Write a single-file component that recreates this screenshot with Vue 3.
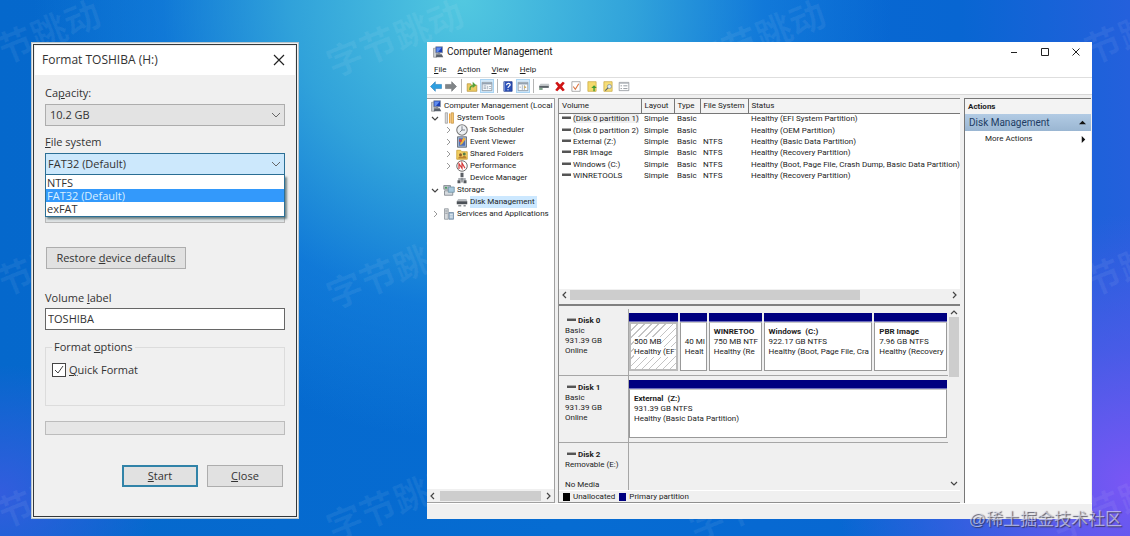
<script setup>
import { ref } from 'vue'

const capacity = ref('10.2 GB')
const fileSystem = ref('FAT32 (Default)')
const fileSystems = ['NTFS', 'FAT32 (Default)', 'exFAT']
const volumeLabel = ref('TOSHIBA')
const quickFormat = ref(true)

const icons = {
  computer: '<path d="M2 3h4v12H2z" fill="#c9cdd2" stroke="#777" stroke-width=".7"/><path d="M5 1h9v8H5z" fill="#1b3fb5" stroke="#8a9099"/><path d="M6 2l7 0-5 6H6z" fill="#5f8cf0"/><path d="M6 11h7l2 4H5z" fill="#59616b"/><path d="M7 9h4v2H7z" fill="#8b8f94"/>',
  tools: '<path d="M3 1h3v14H3z" fill="#d8d8d8" stroke="#8c8c8c" stroke-width=".8"/><path d="M8 2h2v13H8z" fill="#f3a63a"/><path d="M11 1h3v14h-3z" fill="#f7c56b" stroke="#b98331" stroke-width=".8"/>',
  clock: '<circle cx="8" cy="8" r="7" fill="#eef1f4" stroke="#777" stroke-width="1.4"/><path d="M8 3v5h4M8 8l-3 3" fill="none" stroke="#6f7780" stroke-width="1.2"/>',
  event: '<path d="M2 1h12v14H2z" fill="#9fb4cf" stroke="#555c66"/><path d="M4 3h8v10H4z" fill="#4f6fb4"/><path d="M10 2l3 2-5 7-3 1 1-3z" fill="#f2b43c"/><circle cx="6" cy="6" r="2" fill="#d9473b"/>',
  folder: '<path d="M1 3h5l2 2h7v10H1z" fill="#f3cf62" stroke="#c59b2e"/><circle cx="6" cy="9" r="2" fill="#8a5c2c"/><circle cx="11" cy="8" r="2" fill="#567c4a"/><path d="M3 14c0-4 6-4 6 0M8 14c0-5 6-5 6 0" fill="#b9812e"/>',
  performance: '<circle cx="8" cy="8" r="7" fill="#fff" stroke="#6b6b6b" stroke-width="1.3"/><path d="M4 12V5l4 6V4l4 7" fill="none" stroke="#d33b3b" stroke-width="1.6"/>',
  device: '<path d="M6 1h4v6H6z" fill="#5b5f64"/><path d="M3 8h10v3H3z" fill="#a9adb2"/><path d="M2 11h4v4H2zM10 11h4v4h-4z" fill="#55595e"/><path d="M7 8h2v6H7z" fill="#85898e"/>',
  storage: '<path d="M1 2h9v5H1z" fill="#b8bec5" stroke="#7a8087"/><path d="M2 9h11v6H2z" fill="#d5dade" stroke="#747a80"/><path d="M7 4h8v7H7z" fill="#a7c8dc" stroke="#6b8ca0"/><circle cx="4" cy="5" r="1.3" fill="#3c9c55"/>',
  disk: '<path d="M3 4h11l1 3H1z" fill="#b8bcc0"/><path d="M1 7h14v4H1z" fill="#4c5157"/><path d="M3 12h4v2H3zM10 12h3v2h-3z" fill="#8e9296"/>',
  services: '<path d="M2 1h5v14H2z" fill="#d6d9dc" stroke="#8a9096"/><path d="M3 4h3M3 7h3" stroke="#7f868c"/><path d="M8 6h6v9H8z" fill="#a8bfd3" stroke="#6d87a0"/><path d="M9 9h4M9 12h4" stroke="#fff"/>',
  back: '<path d="M0 8l7-7v4h9v6H7v4z" fill="#2e9fe0" stroke="#2178b5" stroke-width=".8"/>',
  forward: '<path d="M16 8L9 1v4H0v6h9v4z" fill="#808487" stroke="#696d70" stroke-width=".8"/>',
  up: '<path d="M1 4h5l1 2h8v9H1z" fill="#eccb62" stroke="#b58d33"/><path d="M4 13c0-5 2-7 5-7V1l5 5-5 4V8c-2 0-3 2-3 5z" fill="#54a23c"/>',
  pane: '<path d="M1 2h14v12H1z" fill="#fafcfe" stroke="#76818d"/><path d="M1 3h14v2H1z" fill="#8d9cad"/><path d="M3 7h4M3 9h4M3 11h4M9 7v5M11 8h3M11 11h3" stroke="#8796a6"/>',
  paneAlt: '<path d="M1 2h14v12H1z" fill="#fafcfe" stroke="#76818d"/><path d="M1 3h14v2H1z" fill="#8d9cad"/><path d="M7 6v7M10 6v7M3 9h2" stroke="#8796a6"/><path d="M10 7l3 2-3 2z" fill="#d5a53a"/>',
  help: '<path d="M2 1h12v14H2z" fill="#2b50b8" stroke="#1b3486"/><path d="M3 1v14" stroke="#9fb4ea"/><path d="M6 6c0-4 6-3 5 0-1 2-3 2-3 4M8 12v1.500" fill="none" stroke="#fff" stroke-width="1.700"/>',
  drive: '<path d="M3 4h12l1 3H1z" fill="#c4c8cb"/><path d="M1 7h14v3H1z" fill="#596066"/><path d="M1 10h5v3H1z" fill="#7fa58a"/>',
  remove: '<path d="M1 3l3-2 4 4 4-4 3 2-4 5 4 5-3 2-4-4-4 4-3-2 4-5z" fill="#cf1414"/>',
  check: '<path d="M2 1h12v14H2z" fill="#fff" stroke="#8b8b8b"/><path d="M4 8l3 4 5-8" fill="none" stroke="#dc7440" stroke-width="1.600"/>',
  docUp: '<path d="M2 1h12v14H2z" fill="#f4da6c" stroke="#c7a53c"/><path d="M10 15V10H7l4-4 4 4h-3v5z" fill="#3f9b33"/>',
  docFind: '<path d="M2 1h12v14H2z" fill="#f6de79" stroke="#c7a53c"/><circle cx="10" cy="8" r="3" fill="#dcecf7" stroke="#788793"/><path d="M8 10l-4 4" stroke="#57616a" stroke-width="1.500"/>',
  list: '<path d="M1 2h14v12H1z" fill="#fff" stroke="#7f858b"/><path d="M1 3h14v1H1z" fill="#a9afb5"/><path d="M3 7h2M3 11h2M7 7h6M7 11h6" stroke="#8a9096" stroke-width="1.300"/>'
}

const menus = ['File', 'Action', 'View', 'Help']
const toolGroups = [
  [{ icon: 'back', name: 'Back' }, { icon: 'forward', name: 'Forward' }],
  [{ icon: 'up', name: 'Up one level' }, { icon: 'pane', name: 'Console tree', on: true }],
  [{ icon: 'help', name: 'Help topics' }, { icon: 'paneAlt', name: 'Action pane', on: true }],
  [
    { icon: 'drive', name: 'Rescan disks' }, { icon: 'remove', name: 'Delete' },
    { icon: 'check', name: 'Properties' }, { icon: 'docUp', name: 'Open' },
    { icon: 'docFind', name: 'Explore' }, { icon: 'list', name: 'Settings' }
  ]
]

const tree = [
  { text: 'Computer Management (Local', icon: 'computer', level: 'root' },
  { text: 'System Tools', icon: 'tools', level: 'one', arrow: 'open' },
  { text: 'Task Scheduler', icon: 'clock', level: 'two', arrow: 'shut' },
  { text: 'Event Viewer', icon: 'event', level: 'two', arrow: 'shut' },
  { text: 'Shared Folders', icon: 'folder', level: 'two', arrow: 'shut' },
  { text: 'Performance', icon: 'performance', level: 'two', arrow: 'shut' },
  { text: 'Device Manager', icon: 'device', level: 'two' },
  { text: 'Storage', icon: 'storage', level: 'one', arrow: 'open' },
  { text: 'Disk Management', icon: 'disk', level: 'two', selected: true },
  { text: 'Services and Applications', icon: 'services', level: 'one', arrow: 'shut' }
]

const volumes = [
  ['(Disk 0 partition 1)', '', 'Healthy (EFI System Partition)'],
  ['(Disk 0 partition 2)', '', 'Healthy (OEM Partition)'],
  ['External (Z:)', 'NTFS', 'Healthy (Basic Data Partition)'],
  ['PBR Image', 'NTFS', 'Healthy (Recovery Partition)'],
  ['Windows (C:)', 'NTFS', 'Healthy (Boot, Page File, Crash Dump, Basic Data Partition)'],
  ['WINRETOOLS', 'NTFS', 'Healthy (Recovery Partition)']
]

const disks = [
  {
    name: 'Disk 0', lines: ['Basic', '931.39 GB', 'Online'],
    parts: [
      { title: '', size: '500 MB', state: 'Healthy (EF', share: 49, hatched: true },
      { title: '', size: '40 MI', state: 'Healt', share: 27 },
      { title: 'WINRETOO', size: '750 MB NTF', state: 'Healthy (Re', share: 53 },
      { title: 'Windows  (C:)', size: '922.17 GB NTFS', state: 'Healthy (Boot, Page File, Cra', share: 109 },
      { title: 'PBR Image', size: '7.96 GB NTFS', state: 'Healthy (Recovery', share: 73 }
    ]
  },
  {
    name: 'Disk 1', lines: ['Basic', '931.39 GB', 'Online'],
    parts: [{ title: 'External  (Z:)', size: '931.39 GB NTFS', state: 'Healthy (Basic Data Partition)', share: 1 }]
  },
  { name: 'Disk 2', lines: ['Removable (E:)', '', 'No Media'], parts: [] }
]

const columnsOf = (disk) => disk.parts.map((p) => `minmax(0, ${p.share}fr)`).join(' ')
</script>

<template>
  <main class="desktop">
    <div class="marks" aria-hidden="true">
      <span v-for="n in 12" :key="n">字节跳动</span>
    </div>

    <section class="dialog" aria-label="Format TOSHIBA">
      <header class="dialog-title">
        <h1>Format TOSHIBA (H:)</h1>
        <button class="plain" aria-label="Close dialog">
          <svg width="12" height="12" viewBox="0 0 12 12"><path d="M1 1l10 10M11 1L1 11" stroke="#222" stroke-width="1.200" /></svg>
        </button>
      </header>
      <form class="dialog-body" @submit.prevent>
        <label for="capacity">Ca<u>p</u>acity:</label>
        <div class="combo">
          <select id="capacity" v-model="capacity"><option>10.2 GB</option></select>
          <svg class="chevron" viewBox="0 0 10 6"><path d="M1 1l4 4 4-4" /></svg>
        </div>
        <label for="fs"><u>F</u>ile system</label>
        <div class="combo open">
          <select id="fs" v-model="fileSystem">
            <option v-for="f in fileSystems" :key="f">{{ f }}</option>
          </select>
          <svg class="chevron" viewBox="0 0 10 6"><path d="M1 1l4 4 4-4" /></svg>
          <ul class="options" role="listbox" aria-label="File system">
            <li v-for="f in fileSystems" :key="f" role="option" :aria-selected="f === fileSystem"
              :class="{ chosen: f === fileSystem }" @click="fileSystem = f">{{ f }}</li>
          </ul>
        </div>
        <div class="covered"></div>
        <button class="btn restore" type="button">Restore <u>d</u>evice defaults</button>
        <label for="vol">Volume <u>l</u>abel</label>
        <input id="vol" v-model="volumeLabel" class="field" type="text">
        <fieldset>
          <legend>Format <u>o</u>ptions</legend>
          <label class="tick">
            <input v-model="quickFormat" type="checkbox">
            <svg v-if="quickFormat" viewBox="0 0 14 14"><path d="M3 7l3 3 5-7" /></svg>
            <span><u>Q</u>uick Format</span>
          </label>
        </fieldset>
        <div class="progress" role="progressbar" aria-label="Format progress" aria-valuenow="0"></div>
        <div class="actions-row">
          <button class="btn primary" type="submit"><u>S</u>tart</button>
          <button class="btn" type="button"><u>C</u>lose</button>
        </div>
      </form>
    </section>

    <section class="manager" aria-label="Computer Management">
      <header class="titlebar">
        <svg class="title-icon" viewBox="0 0 16 16" v-html="icons.computer"></svg>
        <h2>Computer Management</h2>
        <div class="window-buttons">
          <button class="plain" aria-label="Minimize"><svg viewBox="0 0 8 8"><path d="M1 4.500h6" /></svg></button>
          <button class="plain" aria-label="Maximize"><svg viewBox="0 0 8 8"><path d="M.5.5h7v7h-7z" /></svg></button>
          <button class="plain" aria-label="Close window"><svg viewBox="0 0 8 8"><path d="M.5.5l7 7M7.500.5l-7 7" /></svg></button>
        </div>
      </header>
      <nav class="menubar">
        <button v-for="m in menus" :key="m" class="plain"><u>{{ m[0] }}</u>{{ m.slice(1) }}</button>
      </nav>
      <div class="toolbar">
        <div v-for="(group, i) in toolGroups" :key="i" class="tools">
          <button v-for="t in group" :key="t.icon" class="plain" :class="{ on: t.on }" :aria-label="t.name">
            <svg viewBox="0 0 16 16" v-html="icons[t.icon]"></svg>
          </button>
        </div>
      </div>

      <div class="panes">
        <aside class="tree-pane">
          <ul class="tree">
            <li v-for="n in tree" :key="n.text" :class="[n.level, { selected: n.selected }]">
              <span v-if="n.level !== 'root'" class="twist">
                <svg v-if="n.arrow" viewBox="0 0 8 8" :class="n.arrow"><path :d="n.arrow === 'open' ? 'M1 3l3 3 3-3' : 'M3 1l3 3-3 3'" /></svg>
              </span>
              <svg class="node-icon" viewBox="0 0 16 16" v-html="icons[n.icon]"></svg>
              <span class="node-text">{{ n.text }}</span>
            </li>
          </ul>
          <div class="hbar">
            <svg viewBox="0 0 8 8"><path d="M5 1L2 4l3 3" /></svg>
            <div class="track"><i class="whole"></i></div>
            <svg viewBox="0 0 8 8"><path d="M3 1l3 3-3 3" /></svg>
          </div>
        </aside>

        <div class="center">
          <div class="volumes">
            <table>
              <colgroup><col class="c1"><col class="c2"><col class="c3"><col class="c4"><col></colgroup>
              <thead>
                <tr><th>Volume</th><th>Layout</th><th>Type</th><th>File System</th><th>Status</th></tr>
              </thead>
              <tbody>
                <tr v-for="v in volumes" :key="v[0]">
                  <td><i class="pill"></i><span>{{ v[0] }}</span></td>
                  <td>Simple</td><td>Basic</td><td>{{ v[1] }}</td><td>{{ v[2] }}</td>
                </tr>
              </tbody>
            </table>
            <div class="hbar">
              <svg viewBox="0 0 8 8"><path d="M5 1L2 4l3 3" /></svg>
              <div class="track"><i class="partial"></i></div>
              <svg viewBox="0 0 8 8"><path d="M3 1l3 3-3 3" /></svg>
            </div>
          </div>
          <div class="disks">
            <div class="disk-list">
              <div v-for="d in disks" :key="d.name" class="disk">
                <div class="disk-info">
                  <b><i class="pill"></i>{{ d.name }}</b>
                  <span v-for="(l, i) in d.lines" :key="i">{{ l }}</span>
                </div>
                <div class="parts" :style="{ gridTemplateColumns: columnsOf(d) }">
                  <div v-for="p in d.parts" :key="p.size" class="part" :class="{ hatched: p.hatched }">
                    <div class="band"></div>
                    <div class="part-body"><div class="part-text">
                      <b>{{ p.title }}</b><span>{{ p.size }}</span><span>{{ p.state }}</span>
                    </div></div>
                  </div>
                </div>
              </div>
            </div>
            <div class="vbar">
              <svg viewBox="0 0 8 8"><path d="M1 6l3-3 3 3" /></svg>
              <i></i>
              <svg viewBox="0 0 8 8"><path d="M1 2l3 3 3-3" /></svg>
            </div>
          </div>
          <div class="legend">
            <i class="black"></i><span>Unallocated</span><i class="navy"></i><span>Primary partition</span>
          </div>
        </div>

        <aside class="side">
          <h3>Actions</h3>
          <button class="side-head">Disk Management<svg viewBox="0 0 8 8"><path d="M0 6l4-4 4 4z" /></svg></button>
          <button class="side-item">More Actions<svg viewBox="0 0 8 8"><path d="M2 0l4 4-4 4z" /></svg></button>
        </aside>
      </div>
      <footer class="statusbar"></footer>
    </section>

    <div class="credit">@稀土掘金技术社区</div>
  </main>
</template>

<style>
body { margin: 0; }
</style>

<style scoped>
* { box-sizing: border-box; }
h1, h2, h3, ul { margin: 0; padding: 0; font-weight: 400; list-style: none; }
button, input, select { font: inherit; color: inherit; margin: 0; }
.plain { border: 0; padding: 0; background: none; }
i { font-style: normal; }
u { text-underline-offset: 1px; }

.desktop {
  position: relative;
  overflow: hidden;
  min-height: 100vh;
  padding: 42px 38px 17px 31px;
  display: grid;
  grid-template-columns: minmax(0, 268fr) minmax(0, 665fr);
  column-gap: 128px;
  background:
    radial-gradient(ellipse 26% 50% at 100% 90%, rgba(126, 86, 246, .95), rgba(96, 88, 238, .6) 50%, transparent),
    radial-gradient(ellipse 14% 24% at 0 92%, rgba(62, 90, 226, .8), transparent),
    radial-gradient(ellipse 38% 82% at 41% 0, #52c8e0, rgba(56, 172, 220, .85) 40%, rgba(30, 140, 226, .45) 70%, transparent),
    linear-gradient(90deg, #0568cc, #066cd2 50%, #0866d2 85%, #2460dc);
}
.marks {
  position: absolute;
  inset: -80px -170px -80px -150px;
  display: grid;
  grid-template-columns: repeat(4, 1fr);
  align-items: center;
  justify-items: center;
  color: rgba(255, 255, 255, .06);
  font: 700 36px/40px "Noto Sans CJK SC", sans-serif;
}
.marks span { transform: rotate(-22deg); }

.dialog {
  position: relative;
  display: flex;
  flex-direction: column;
  border: 1px solid #b8c6cd;
  outline: 1px solid #33383b;
  outline-offset: -3px;
  padding: 2px;
  background: #f0f0f0;
  color: #333;
  font: 11px/14px "Open Sans", sans-serif;
}
.dialog-title {
  display: flex;
  align-items: center;
  justify-content: space-between;
  height: 29px;
  padding: 0 10px 2px 7px;
  background: #fff;
  margin: 1px 1px 0;
}
h1 { font-size: 12px; }
.plain svg { display: block; }
.dialog-body { display: flex; flex-direction: column; padding: 11px 11px 0; }
.combo { position: relative; margin: 4px 0 9px; }
.combo select {
  display: block;
  appearance: none;
  width: 100%;
  height: 22px;
  padding: 0 4px;
  border: 1px solid #adadad;
  border-radius: 0;
  background: #e3e3e3;
}
.combo.open { margin: 4px 0 0; }
.combo.open select { background: #cce8fc; border-color: #2b6f95; padding: 0 2px; }
.chevron { position: absolute; right: 4px; top: 8px; width: 10px; height: 6px; fill: none; stroke: #666; }
.options {
  position: absolute;
  z-index: 1;
  top: 22px;
  left: 0;
  right: 0;
  padding: 1px 0;
  border: 1px solid #2b6f95;
  border-top: 0;
  background: #fff;
  line-height: 13px;
  box-shadow: 2px 2px 2px rgba(50, 80, 85, .65);
}
.options li { padding-left: 1px; }
.options .chosen { background: #3399fb; color: #d8efff; }
.covered { height: 22px; margin-top: 26px; border: 1px solid #b8b8b8; background: #dfe3e4; }
.btn { height: 22px; width: 76px; padding: 0; border: 1px solid #adadad; background: #e1e1e1; }
.restore { width: 140px; margin: 24px 0 22px 1px; }
.field { height: 22px; margin-top: 3px; padding: 0 2px 2px; border: 1px solid #666; background: #fff; }
fieldset { min-width: 0; height: 66px; margin: 10px 0 0; padding: 9px 6px 0; border: 1px solid #dcdcdc; }
legend { padding: 0 2px; }
.tick { position: relative; display: flex; align-items: center; gap: 3px; }
.tick input { appearance: none; width: 14px; height: 14px; border: 1px solid #444; background: #fff; }
.tick svg { position: absolute; left: 0; width: 14px; height: 14px; fill: none; stroke: #444; pointer-events: none; }
.progress { height: 14px; margin-top: 15px; border: 1px solid #bcbcbc; background: #e6e6e6; }
.actions-row { display: flex; justify-content: flex-end; gap: 9px; padding-right: 2px; margin-top: 30px; }
.primary { border: 2px solid #3183a8; }

.manager {
  position: relative;
  display: flex;
  flex-direction: column;
  min-width: 0;
  background: #fff;
  color: #1c1c1c;
  font: 8px/12px Roboto, "Open Sans", sans-serif;
}
.titlebar { display: flex; align-items: center; height: 21px; padding: 0 12px 1px 5px; }
.title-icon { width: 12px; height: 12px; margin-right: 3px; }
h2 { flex: 1; font-size: 10px; }
.window-buttons { display: flex; gap: 23px; }
.window-buttons svg { width: 8px; height: 8px; fill: none; stroke: #222; stroke-width: 1; }
.menubar { display: flex; gap: 11px; height: 14px; padding: 0 7px; align-items: center; }
.toolbar {
  display: flex;
  align-items: center;
  height: 18px;
  border-top: 1px solid #dedede;
  border-bottom: 1px solid #d8d8d8;
  padding-left: 2px;
}
.tools { display: flex; gap: 1px; padding-right: 3px; margin-right: 3px; border-right: 1px solid #b5b5b5; }
.tools:last-child { border: 0; gap: 2px; }
.tools button { width: 14px; height: 14px; display: grid; place-items: center; }
.tools svg { width: 12px; height: 11px; }
.tools .on { background: #d3e9fa; outline: 1px solid #a9d3f2; outline-offset: -1px; }
.panes {
  flex: 1;
  display: grid;
  grid-template-columns: minmax(0, 128fr) minmax(0, 402fr) minmax(0, 128fr);
  column-gap: 3px;
  padding: 3px 1px 0 0;
  background: #f0f0f0;
}
.tree-pane { display: flex; flex-direction: column; border: 1px solid #a0a0a0; border-left: 0; background: #fff; }
.tree { flex: 1; overflow: hidden; }
.tree li { display: flex; align-items: center; height: 12px; white-space: nowrap; }
.tree .root { height: 13px; padding-left: 3px; }
.one { padding-left: 4px; }
.two { padding-left: 17px; }
.twist { width: 12px; display: flex; flex: none; }
.twist svg { width: 8px; height: 8px; fill: none; stroke: #999; }
.twist .open { stroke: #444; stroke-width: 1.2; }
.node-icon { flex: none; width: 12px; height: 12px; margin-right: 2px; }
.selected .node-text { background: #cce8ff; padding-right: 2px; }
.hbar { display: flex; align-items: center; height: 13px; padding: 0 2px; background: #f0f0f0; }
.hbar svg, .vbar svg { flex: none; width: 8px; height: 8px; fill: none; stroke: #444; stroke-width: 1.2; }
.track { flex: 1; height: 10px; }
.track i { display: block; height: 100%; background: #cdcdcd; }
.whole { margin: 0 3px; }
.partial { width: 76%; margin-left: 1px; }
.center { display: flex; flex-direction: column; min-width: 0; border: 1px solid #8f8f8f; border-width: 1px 0 1px 1px; background: #f0f0f0; }
.volumes { flex: 1; display: flex; flex-direction: column; justify-content: space-between; background: #fff; border-bottom: 2px solid #808080; }
.volumes .hbar { height: 15px; padding-bottom: 3px; }
table { width: 100%; height: 83px; table-layout: fixed; border-collapse: collapse; }
.c1 { width: 82px; }
.c2 { width: 33px; }
.c3 { width: 26px; }
.c4 { width: 48px; }
th { height: 14px; padding: 1px 3px 0; text-align: left; font-weight: 400; background: #f3f3f3; border-right: 1px solid #777; border-bottom: 1px solid #777; white-space: nowrap; line-height: 10px; }
th:last-child { border-right: 0; }
td { padding: 0 3px; white-space: nowrap; line-height: 10px; }
td:last-child, th:last-child { padding-right: 0; }
tbody tr:first-child td:first-child span { background: #f0f0f0; }
.pill { display: inline-block; width: 9px; height: 3px; margin-right: 2px; vertical-align: 2px; background: #555; border-top: 1px solid #aaa; }
.disks { display: flex; height: 184px; }
.disk-list { flex: 1; min-width: 0; overflow: hidden; padding-top: 3px; }
.disk { display: grid; grid-template-columns: 70px minmax(0, 1fr); height: 67px; border-bottom: 1px solid #a6a6a6; }
.disk-info { display: flex; flex-direction: column; padding: 7px 6px 0; line-height: 10px; border-right: 1px solid #a6a6a6; }
.disk-info b { padding-left: 2px; }
.disk-info span { min-height: 10px; }
.parts { display: grid; gap: 2px; padding: 4px 1px 4px 0; }
.part { display: flex; flex-direction: column; min-width: 0; }
.band { height: 9px; background: #000080; border-bottom: 1px solid #6d6dbd; }
.part-body { flex: 1; padding: 1px; background: #fff; border: 1px solid #999; border-top-color: #c8c8c8; }
.part-text { display: flex; flex-direction: column; padding: 3px 0 0 3px; overflow: hidden; height: 100%; line-height: 10px; white-space: pre; }
.part-text > * { min-height: 10px; }
.hatched .part-body { border: 2px solid #bbb; padding: 0; background: repeating-linear-gradient(135deg, #fff 0 4px, #c4c4c4 4px 5px); }
.hatched span { align-self: flex-start; background: #fff; }
.vbar { display: flex; flex-direction: column; align-items: center; width: 12px; padding: 2px 0; }
.vbar i { width: 10px; height: 60px; margin: 1px 0 auto; background: #cdcdcd; }
.legend { display: flex; align-items: center; gap: 3px; height: 12px; padding-left: 4px; border-top: 1px solid #fff; }
.legend i { width: 7px; height: 8px; }
.legend span + i { margin-left: 1px; }
.black { background: #000; }
.navy { background: #000080; }
.side { display: flex; flex-direction: column; margin-left: 1px; border-left: 1px solid #777; border-top: 1px solid #777; background: #fff; }
h3 { padding: 2px 3px 1px; background: #f3f3f3; font-size: 8px; font-weight: 700; }
.side button { display: flex; align-items: center; justify-content: space-between; border: 0; text-align: left; }
.side-head { height: 17px; padding: 0 5px 0 4px; background: linear-gradient(#b2cbe4, #9ab6d2); color: #1e3c63; font-size: 10px; }
.side-item { height: 16px; padding: 0 4px 0 20px; background: none; }
.side svg { width: 7px; height: 7px; fill: #111; }
.statusbar { height: 16px; background: #f0f0f0; border-top: 1px solid #fff; }
.credit {
  position: absolute;
  right: 8px;
  bottom: 4px;
  color: rgba(235, 235, 245, .6);
  font: 17px/24px "Liberation Sans", "Noto Sans CJK SC", sans-serif;
  text-shadow: 1px 1px 1px rgba(50, 50, 70, .8);
}
</style>
